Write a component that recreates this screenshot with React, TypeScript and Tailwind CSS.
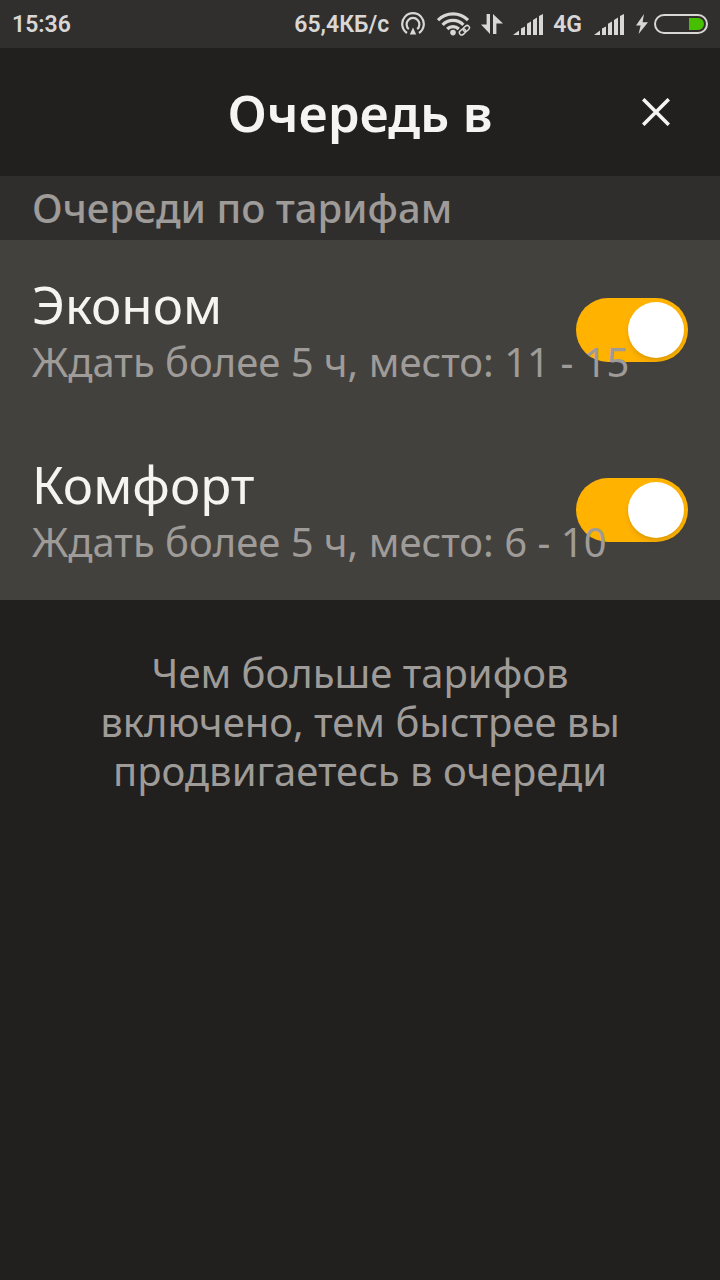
import { useState } from "react";

type Tariff = {
  id: string;
  name: string;
  status: string;
};

const tariffs: Tariff[] = [
  { id: "econom", name: "Эконом", status: "Ждать более 5 ч, место: 11 - 15" },
  { id: "comfort", name: "Комфорт", status: "Ждать более 5 ч, место: 6 - 10" },
];

function HotspotIcon() {
  return (
    <svg width="24" height="24" viewBox="0 0 24 24" fill="none" stroke="currentColor" aria-hidden="true">
      <path d="M6 21a10.8 10.8 0 1 1 12 0" strokeWidth="2.2" />
      <path d="M7.8 17.2a6.4 6.4 0 1 1 8.4 0" strokeWidth="2.2" />
      <path d="M12 15.6l3.2 7H8.8z" fill="currentColor" stroke="none" />
    </svg>
  );
}

function WifiIcon() {
  return (
    <svg width="34" height="24" viewBox="0 0 34 24" fill="none" stroke="currentColor" aria-hidden="true">
      <path d="M1 8.2a21 21 0 0 1 30 0" strokeWidth="3.2" />
      <path d="M5.6 12.8a14.5 14.5 0 0 1 20.8 0" strokeWidth="3.2" />
      <path d="M10.2 17a8.2 8.2 0 0 1 11.6 0" strokeWidth="3.2" />
      <circle cx="16" cy="20.6" r="2.8" fill="currentColor" stroke="none" />
      <g transform="rotate(-42 27.5 18)">
        <rect x="20.4" y="14.4" width="14" height="7.4" rx="3.7" fill="#302f2d" stroke="none" />
        <rect x="21.4" y="15.8" width="6.8" height="4.6" rx="2.3" strokeWidth="1.5" />
        <rect x="26.4" y="15.8" width="6.8" height="4.6" rx="2.3" strokeWidth="1.5" />
      </g>
    </svg>
  );
}

function TransferIcon() {
  return (
    <svg width="22" height="20" viewBox="0 0 22 20" fill="currentColor" aria-hidden="true">
      <path d="M5.6 0H9v20L0 10.6h5.6z" />
      <path d="M12 20h3.4V9.4H22L12 0z" />
    </svg>
  );
}

function SignalIcon() {
  return (
    <svg width="30" height="21" viewBox="0 0 30 21" fill="currentColor" aria-hidden="true">
      <path d="M0 21l6-4.6V21z" />
      <path d="M8 14.4l4-2V21H8zM14 9.8l4-2.2V21h-4zM20 6l4-2.4V21h-4zM26 2l4-2v21h-4z" />
    </svg>
  );
}

function BoltIcon() {
  return (
    <svg width="12" height="20" viewBox="0 0 12 20" fill="currentColor" aria-hidden="true">
      <path d="M8 0L0 11.4h4.6L2.6 20 12 8.2H6.6z" />
    </svg>
  );
}

function BatteryIcon() {
  return (
    <svg width="54" height="20" viewBox="0 0 54 20" fill="none" aria-hidden="true">
      <rect x="1" y="1" width="52" height="18" rx="9" stroke="currentColor" strokeWidth="2" />
      <path d="M35 4h9a6 6 0 0 1 0 12h-9z" fill="#45bf00" />
    </svg>
  );
}

function StatusBar() {
  return (
    <div className="flex h-12 items-center justify-between bg-[#302f2d] px-3 font-['Roboto',sans-serif] text-[23px] leading-6 font-semibold text-[#d9d7d5]">
      <span className="pt-0.5">15:36</span>
      <div className="flex items-center gap-3">
        <span className="pt-0.5">65,4КБ/с</span>
        <HotspotIcon />
        <div className="flex items-center gap-2.5">
          <WifiIcon />
          <TransferIcon />
          <SignalIcon />
          <span className="pt-0.5">4G</span>
        </div>
        <SignalIcon />
        <div className="flex items-center gap-1.5">
          <BoltIcon />
          <BatteryIcon />
        </div>
      </div>
    </div>
  );
}

function TariffRow({ tariff }: { tariff: Tariff }) {
  const [enabled, setEnabled] = useState(true);

  return (
    <li className="flex h-[180px] items-center px-8">
      <label
        htmlFor={tariff.id}
        className="relative z-10 min-w-0 flex-1 pt-1 whitespace-nowrap"
      >
        <span className="block text-[51px] leading-[60px] text-[#f5f4f0]">{tariff.name}</span>
        <span className="block text-[40px] leading-[56px] text-[#9e9b98]">{tariff.status}</span>
      </label>
      <input
        id={tariff.id}
        type="checkbox"
        role="switch"
        checked={enabled}
        onChange={(e) => setEnabled(e.target.checked)}
        className="h-16 w-28 shrink-0 cursor-pointer appearance-none rounded-full bg-[#6b6965] p-1 transition-colors before:block before:size-14 before:rounded-full before:bg-white before:shadow-md before:transition-transform checked:bg-[#ffb200] checked:before:translate-x-12"
      />
    </li>
  );
}

export default function App() {
  return (
    <div className="min-h-screen bg-[#21201e] font-['Noto_Sans',sans-serif]">
      <StatusBar />

      <header className="grid h-32 grid-cols-[64px_1fr_64px] items-center px-8">
        <h1 className="col-start-2 text-center text-[51px] leading-[60px] font-semibold text-[#f5f4f2]">
          Очередь в
        </h1>
        <button type="button" aria-label="Закрыть" className="flex size-16 items-center justify-center text-[#f5f4f2]">
          <svg width="28" height="28" viewBox="0 0 28 28" stroke="currentColor" strokeWidth="3.6" aria-hidden="true">
            <path d="M1.2 1.2l25.6 25.6M26.8 1.2L1.2 26.8" />
          </svg>
        </button>
      </header>

      <main>
        <h2 className="h-16 bg-[#302e2d] px-8 text-[40px] leading-[64px] font-medium text-[#9e9b98]">
          Очереди по тарифам
        </h2>
        <ul className="bg-[#43413d]">
          {tariffs.map((tariff) => (
            <TariffRow key={tariff.id} tariff={tariff} />
          ))}
        </ul>
        <p className="px-20 pt-12 text-center text-[40px] leading-[49px] text-[#9e9b98]">
          Чем больше тарифов включено, тем быстрее вы продвигаетесь в очереди
        </p>
      </main>
    </div>
  );
}
